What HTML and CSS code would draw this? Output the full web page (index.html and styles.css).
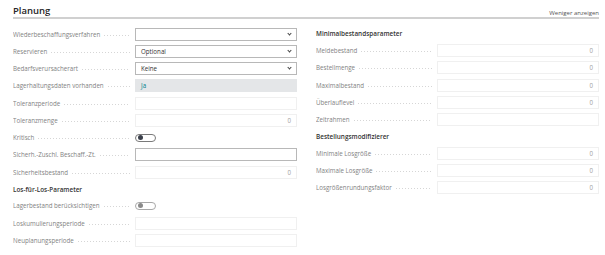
FILE: index.html
```html
<!DOCTYPE html>
<html lang="de">
<head>
  <meta charset="UTF-8">
  <title>Planung</title>
  <link rel="stylesheet" href="styles.css">
</head>
<body>
<div class="page">
  <div class="group-head">
    <h2>Planung</h2>
    <a class="more">Weniger anzeigen</a>
  </div>
  <div class="columns">
    <div class="col">
      <div class="row">
        <span class="label">Wiederbeschaffungsverfahren</span>
        <div class="field select"><span></span><span class="caret"></span></div>
      </div>
      <div class="row">
        <span class="label">Reservieren</span>
        <div class="field select"><span>Optional</span><span class="caret"></span></div>
      </div>
      <div class="row">
        <span class="label">Bedarfsverursacherart</span>
        <div class="field select"><span>Keine</span><span class="caret"></span></div>
      </div>
      <div class="row">
        <span class="label">Lagerhaltungsdaten vorhanden</span>
        <div class="field filled"><span class="link">Ja</span></div>
      </div>
      <div class="row">
        <span class="label">Toleranzperiode</span>
        <div class="field readonly"></div>
      </div>
      <div class="row">
        <span class="label">Toleranzmenge</span>
        <div class="field readonly num">0</div>
      </div>
      <div class="row">
        <span class="label">Kritisch</span>
        <div class="toggle"><span class="knob"></span></div>
      </div>
      <div class="row">
        <span class="label">Sicherh.-Zuschl. Beschaff.-Zt.</span>
        <div class="field edit"></div>
      </div>
      <div class="row">
        <span class="label">Sicherheitsbestand</span>
        <div class="field readonly num">0</div>
      </div>
      <div class="subhead">Los-für-Los-Parameter</div>
      <div class="row">
        <span class="label">Lagerbestand berücksichtigen</span>
        <div class="toggle disabled"><span class="knob"></span></div>
      </div>
      <div class="row">
        <span class="label">Loskumulierungsperiode</span>
        <div class="field readonly"></div>
      </div>
      <div class="row">
        <span class="label">Neuplanungsperiode</span>
        <div class="field readonly"></div>
      </div>
    </div>
    <div class="col">
      <div class="subhead">Minimalbestandsparameter</div>
      <div class="row">
        <span class="label">Meldebestand</span>
        <div class="field readonly num">0</div>
      </div>
      <div class="row">
        <span class="label">Bestellmenge</span>
        <div class="field readonly num">0</div>
      </div>
      <div class="row">
        <span class="label">Maximalbestand</span>
        <div class="field readonly num">0</div>
      </div>
      <div class="row">
        <span class="label">Überlauflevel</span>
        <div class="field readonly num">0</div>
      </div>
      <div class="row">
        <span class="label">Zeitrahmen</span>
        <div class="field readonly"></div>
      </div>
      <div class="subhead">Bestellungsmodifizierer</div>
      <div class="row">
        <span class="label">Minimale Losgröße</span>
        <div class="field readonly num">0</div>
      </div>
      <div class="row">
        <span class="label">Maximale Losgröße</span>
        <div class="field readonly num">0</div>
      </div>
      <div class="row">
        <span class="label">Losgrößenrundungsfaktor</span>
        <div class="field readonly num">0</div>
      </div>
    </div>
  </div>
</div>
</body>
</html>
```

FILE: styles.css
```css
* { box-sizing: border-box; }
body {
  margin: 0;
  background: #fff;
  font-family: 'Open Sans', 'Noto Sans', sans-serif;
  color: #212121;
}
.page {
  padding: 5px 6px 0 13px;
}
.group-head {
  display: flex;
  justify-content: space-between;
  align-items: flex-end;
  border-bottom: 2px solid #d0d0d0;
  height: 14px;
}
.group-head h2 {
  margin: 0;
  font-size: 9.5px;
  font-weight: 600;
  color: #262626;
  line-height: 12px;
}
.more {
  font-size: 6px;
  color: #555;
  line-height: 8px;
  margin-bottom: 0;
}
.columns {
  display: grid;
  grid-template-columns: 284px 283px;
  column-gap: 19px;
  padding-top: 6.5px;
}
.row {
  display: flex;
  align-items: center;
  height: 17.25px;
}
.label {
  flex: 1;
  font-size: 6.2px;
  color: #828282;
  white-space: nowrap;
  overflow: hidden;
  margin-right: 5px;
  display: flex;
  align-items: center;
}
.label::after {
  content: "";
  flex: 1;
  height: 1px;
  margin-left: 4px;
  margin-top: 2px;
  background-image: linear-gradient(to right, #d6d6d6 1px, transparent 1px);
  background-size: 3px 1px;
  background-repeat: repeat-x;
}
.field {
  width: 162px;
  height: 13px;
  font-size: 6.2px;
  display: flex;
  align-items: center;
  padding: 0 5px;
  color: #333;
}
.select {
  border: 1px solid #b8b8b8;
  justify-content: space-between;
}
.caret {
  width: 3px;
  height: 3px;
  border-right: 1px solid #444;
  border-bottom: 1px solid #444;
  transform: rotate(45deg);
  margin-top: -2px;
}
.edit {
  border: 1px solid #b8b8b8;
}
.filled {
  background: #e4e6e8;
  border: 1px solid #e4e6e8;
}
.link {
  color: #00808b;
}
.readonly {
  border: 1px solid #f0f0f0;
}
.num {
  justify-content: flex-end;
  color: #a0a0a0;
}
.toggle {
  width: 21px;
  height: 8px;
  border: 1px solid #7a7a7a;
  border-radius: 5px;
  display: flex;
  align-items: center;
  padding-left: 2px;
  margin-right: 141px;
}
.knob {
  width: 5px;
  height: 5px;
  border-radius: 50%;
  background: #3a3f4a;
}
.toggle.disabled {
  border-color: #a8a8a8;
}
.toggle.disabled .knob {
  background: #8a8a8a;
}
.subhead {
  height: 16.5px;
  display: flex;
  align-items: center;
  font-size: 6.4px;
  font-weight: 600;
  color: #333;
}
```
